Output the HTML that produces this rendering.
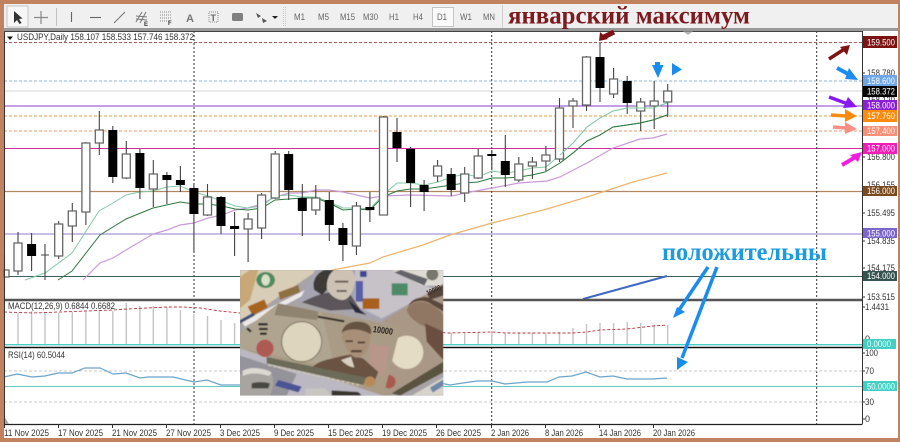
<!DOCTYPE html>
<html><head><meta charset="utf-8"><style>
html,body{margin:0;padding:0;background:#c1835f}
svg{display:block;filter:blur(.35px)}
text{font-family:"Liberation Sans",sans-serif;font-size:9px;fill:#333}
.tf{fill:#666;font-size:9px}
.s{font-family:"Liberation Serif",serif;font-weight:bold;font-size:25px}
</style></head><body>
<svg width="900" height="442" viewBox="0 0 900 442" xmlns="http://www.w3.org/2000/svg">
<defs>
<clipPath id="im"><rect x="0" y="0" width="610" height="377"/></clipPath>
<filter id="b" x="-5%" y="-5%" width="110%" height="110%"><feGaussianBlur stdDeviation="1.800"/></filter>
</defs>
<rect width="900" height="442" fill="#c1835f"/>
<!-- toolbar -->
<rect x="4" y="4" width="894" height="25" fill="#f0f0f0"/>
<rect x="4" y="28" width="894" height="3" fill="#9a9a9a"/>
<rect x="7" y="6" width="21" height="21" fill="#f7f7f7" stroke="#c4c4c4"/>
<path d="M14 11l0 12 3-3 2.500 4 2-1-2.500-4 3.500-.5z" fill="#333"/>
<path d="M41 11v13M34 17.500h14" stroke="#888" stroke-width="1.200" fill="none"/>
<path d="M56.500 8v18" stroke="#c2c2c2"/>
<path d="M71.500 12v10" stroke="#666" stroke-width="1.100"/>
<path d="M90 17.500h11" stroke="#666" stroke-width="1.100"/>
<path d="M114 23l11-11" stroke="#777" stroke-width="1.100"/>
<path d="M136 22l6-10M140 23l6-11M136 16l11 1M136 19l11 1" stroke="#777" fill="none"/>
<text x="144" y="26" style="font-size:6px;font-weight:bold">E</text>
<path d="M160 12h12M160 15h12M160 18h12M160 21h9" stroke="#888" stroke-dasharray="1 1"/>
<text x="168" y="25" style="font-size:6px;font-weight:bold">F</text>
<text x="186" y="22" style="font-size:11px;font-weight:bold;fill:#777">A</text>
<rect x="209" y="12" width="9" height="10" fill="none" stroke="#888" stroke-dasharray="1 1"/>
<text x="210.500" y="21" style="font-size:9px;font-weight:bold;fill:#666">T</text>
<rect x="232" y="13" width="11" height="8" rx="1.500" fill="#808080"/>
<path d="M256 13l5 3-3 2zM262 18l5 3-4 2z" fill="#555"/>
<path d="M272 16h6l-3 3z" fill="#222"/>
<path d="M283.500 7v19M285.500 7v19" stroke="#c8c8c8" stroke-dasharray="1 1"/>
<text class="tf" x="294" y="20" textLength="11" lengthAdjust="spacingAndGlyphs">M1</text>
<text class="tf" x="318" y="20" textLength="11" lengthAdjust="spacingAndGlyphs">M5</text>
<text class="tf" x="340" y="20" textLength="15" lengthAdjust="spacingAndGlyphs">M15</text>
<text class="tf" x="363" y="20" textLength="15" lengthAdjust="spacingAndGlyphs">M30</text>
<text class="tf" x="389" y="20" textLength="10" lengthAdjust="spacingAndGlyphs">H1</text>
<text class="tf" x="413" y="20" textLength="10" lengthAdjust="spacingAndGlyphs">H4</text>
<rect x="432.500" y="7.500" width="21" height="19" fill="#fafafa" stroke="#c4c4c4"/>
<text class="tf" x="437" y="20" textLength="10" lengthAdjust="spacingAndGlyphs">D1</text>
<text class="tf" x="460" y="20" textLength="12" lengthAdjust="spacingAndGlyphs">W1</text>
<text class="tf" x="483" y="20" textLength="12" lengthAdjust="spacingAndGlyphs">MN</text>
<path d="M502.500 5v23" stroke="#d0d0d0"/>
<text class="s" x="508" y="23.500" style="fill:#7d1a1f" textLength="242" lengthAdjust="spacingAndGlyphs">январский максимум</text>

<!-- chart bg -->
<rect x="4" y="31" width="894" height="407" fill="#fff"/>
<!-- levels -->
<g fill="none">
<path d="M4 42.500H862" stroke="#8c2a2a" stroke-width=".8" stroke-dasharray="3 2"/>
<path d="M4 81H862" stroke="#8eb6e0" stroke-width=".9" stroke-dasharray="3 2"/>
<path d="M4 91H862" stroke="#dedede" stroke-width="1.200"/>
<path d="M4 106H862" stroke="#8a3cc8" stroke-width="1.100"/>
<path d="M4 116H862" stroke="#e2a040" stroke-width=".9" stroke-dasharray="3 2"/>
<path d="M4 131H862" stroke="#ee9d72" stroke-width=".9" stroke-dasharray="3 2"/>
<path d="M4 148.500H862" stroke="#d02c9c" stroke-width="1.100"/>
<path d="M4 191.500H862" stroke="#b08860" stroke-width="1.200"/>
<path d="M4 234H862" stroke="#a898d8" stroke-width="1.200"/>
<path d="M4 276.500H862" stroke="#3e6058" stroke-width="1"/>
<path d="M194 31V424M491.700 31V424M816.700 31V424" stroke="#333" stroke-width="1" stroke-dasharray="2 2"/>
</g>
<!-- MA lines -->
<g fill="none" stroke-width="1">
<polyline stroke="#ecb56c" stroke-width="1.200" points="332,270 370,263 383,257 423,245 450,235 492,223 500,221 547,209 587,197 633,182 667,173"/>
<polyline stroke="#c89ad8" stroke-width="1.200" points="83,280 100,263 113,258 126,250 153,234 167,230 180,225 194,223 208,218 222,215 235,210 248,208 262,204 275,197 289,193 302,193 316,190 329,190 343,192 370,198 383,196 410,195 452,196 465,193 492,188 519,183 547,181 560,177 587,163 613,148 640,139 653,138 667,134"/>
<polyline stroke="#86c8a8" points="25,280 45,273 72,253 99,211 113,203 126,195 140,192 153,191 167,187 180,186 194,192 208,196 222,201 235,206 248,208 262,206 275,196 289,195 302,197 316,197 329,202 343,208 357,208 370,209 383,195 397,183 410,183 424,185 438,182 452,177 465,174 478,177 492,171 506,173 519,171 532,168 546,167 560,155 573,143 587,127 600,118 613,111 627,108 640,108 653,108 667,103"/>
<polyline stroke="#2e7a42" points="58,280 72,271 100,235 126,219 153,208 180,202 194,204 208,204 222,206 235,209 248,210 262,208 275,200 289,199 302,198 316,198 329,203 343,210 357,209 370,210 383,197 397,191 410,189 424,189 438,187 452,185 465,183 478,182 492,178 506,178 519,177 532,175 545,172 560,163 573,153 587,141 600,135 613,127 627,125 640,123 653,120 667,115"/>
</g>
<path d="M583 299L667 276" stroke="#3f68c4" stroke-width="2" fill="none"/>
<!-- wicks -->
<path fill="none" stroke="#444" stroke-width="1.100" d="M4.500 255V290M18 232V275M31.600 233V271M45 244V280M41 255H49M58.700 221V259M72.300 203V242M85.900 142V225M99.300 111V155M112.800 126V183M126.300 141V179M139.900 149V199M153.300 160V207M166.900 172V204M180.400 166V192M193.900 183V251M207.500 184V216M221 196V234M234.600 212V256M248.100 213V262M261.600 193V239M275.200 151V199M288.700 151V200M302.300 184V236M315.800 185V215M329.300 192V241M342.900 223V261M356.400 202V255M369.900 192V222M383.500 116V215M397 118V162M410.600 147V207M424.100 180V211M437.600 160V182M451.200 168V196M464.700 167V202M478.200 149V179M491.800 150V170M505.300 135V187M518.800 157V182M532.400 157V179M545.900 146V171M559.500 98V162M573 98V128M586.500 56V111M600 43V102M613.600 68V98M627.200 76V114M640.700 98V131M654.200 81V129M667.700 84V117"/>
<!-- white bodies -->
<path fill="#fff" stroke="#666" stroke-width="1.300" d="M4 270h5v7h-5zM14 243h8V271h-8zM54.700 224h8V256h-8zM68.300 211h8V226h-8zM81.900 143h8V212h-8zM95.300 130h8V143h-8zM122.300 154h8V178h-8zM149.300 174h8V189h-8zM203.500 197h8V215h-8zM244.100 219h8V229h-8zM257.600 195h8V228h-8zM271.200 154h8V198h-8zM311.800 198h8V210h-8zM352.400 206h8V246h-8zM379.500 117h8V215h-8zM433.600 166h8V176h-8zM460.700 174h8V193h-8zM474.200 156h8V178h-8zM514.800 164h8V180h-8zM528.400 162h8V166h-8zM541.900 155h8V161h-8zM555.500 108h8V159h-8zM569 101h8V106h-8zM582.500 57h8V105h-8zM609.600 79h8V94h-8zM636.700 102h8V111h-8zM650.200 101h8V106h-8zM663.700 91h8V102h-8z"/>
<!-- black bodies -->
<path fill="none" stroke="#000" stroke-width="9" d="M31.600 244V256M112.800 130V177M139.900 153V188M166.900 175V180M180.400 180V185M193.900 188V214M221 197V226M234.600 226V229M288.700 154V190M302.300 198V211M329.300 200V225M342.900 228V245M369.900 207V210M397 132V148M410.600 149V183M424.100 185V192M451.200 174V190M491.800 154V156M505.300 161V175M600 57V88M627.200 81V103"/>
<!-- MA over candles -->
<polyline fill="none" stroke="#86c8a8" stroke-width=".9" points="560,155 573,143 587,127 600,118 613,111 627,108 640,108 653,108 667,103"/>
<polyline fill="none" stroke="#2e7a42" stroke-width=".9" points="560,163 573,153 587,141 600,135 613,127 627,125 640,123 653,120 667,115"/>

<text x="17" y="40" textLength="177" lengthAdjust="spacingAndGlyphs">USDJPY,Daily  158.107 158.533 157.746 158.372</text>
<path d="M7 36.500h6l-3 3.500z" fill="#111"/>

<!-- MACD -->
<path fill="none" stroke="#c4c4c4" stroke-width="1.400" d="M18 344V313M31.600 344V311M45 344V312M58.700 344V313M72.300 344V312M85.900 344V311M99.300 344V310M112.800 344V311M126.300 344V303M139.900 344V306M153.300 344V306M166.900 344V307M180.400 344V310M193.900 344V314M207.500 344V316M221 344V320M234.600 344V323M451.200 344V333M464.700 344V333M478.200 344V333M491.800 344V331M505.300 344V333M518.800 344V333M532.400 344V333M545.900 344V333M559.500 344V332M573 344V328M586.500 344V324M600 344V323M613.600 344V323M627.200 344V322M640.700 344V323M654.200 344V325M667.700 344V325"/>
<polyline fill="none" stroke="#c0303a" stroke-width=".9" stroke-dasharray="3 2" points="4,312 33,313 113,310 127,309 167,307 183,307 200,308 220,311 240,313 447,333 492,332 507,333 573,333 587,332 600,330 627,329 653,326 667,325"/>
<text x="8" y="309" textLength="107" lengthAdjust="spacingAndGlyphs">MACD(12,26,9) 0.6844 0.6682</text>
<path d="M4 344.700H862" stroke="#48cfc4" stroke-width="1.300"/>
<path d="M4 300H862" stroke="#555" stroke-width="2.500"/>
<path d="M4 347.500H862" stroke="#111" stroke-width="1.500"/>
<!-- RSI -->
<path d="M4 371H862M4 402H862" stroke="#c8c8c8" stroke-dasharray="3 2" stroke-width=".9"/>
<path d="M4 386.500H862" stroke="#5fcdc4" stroke-width="1"/>
<polyline fill="none" stroke="#6aa4cc" stroke-width="1.200" points="4,377 17,374 32,377 45,376 58,373 72,373 85,368 100,368 113,374 126,373 140,378 148,377 173,377 194,382 207,380 221,385 240,385 440,383 450,385 463,383 477,381 492,381 505,384 527,382 547,382 559,377 572,376 586,372 600,377 613,376 627,379 653,379 667,378"/>
<text x="8" y="358" textLength="57" lengthAdjust="spacingAndGlyphs">RSI(14) 60.5044</text>
<path d="M4 424.500H862" stroke="#222" stroke-width="1.200"/>
<path d="M4 416l5 8H4z" fill="#aaa"/>
<!-- axis line -->
<path d="M862.500 31V424.500M4.500 31V424" stroke="#333" stroke-width="1"/>
<path d="M4 31.500H862" stroke="#444"/>
<!-- ticks -->
<path stroke="#333" d="M4.500 424v4M58.500 424v4M112.500 424v4M166.500 424v4M220.500 424v4M274.500 424v4M328.500 424v4M382.500 424v4M436.500 424v4M491.500 424v4M545.500 424v4M599.500 424v4M653.500 424v4M862 73h3M862 157h3M862 213h3M862 241h3M862 268h3M862 297h3M862 307h3M862 353h3M862 371h3M862 402h3M862 419h3"/>
<text x="4" y="436" textLength="45" lengthAdjust="spacingAndGlyphs">11 Nov 2025</text>
<text x="58" y="436" textLength="45" lengthAdjust="spacingAndGlyphs">17 Nov 2025</text>
<text x="112" y="436" textLength="45" lengthAdjust="spacingAndGlyphs">21 Nov 2025</text>
<text x="166" y="436" textLength="45" lengthAdjust="spacingAndGlyphs">27 Nov 2025</text>
<text x="220" y="436" textLength="40" lengthAdjust="spacingAndGlyphs">3 Dec 2025</text>
<text x="274" y="436" textLength="40" lengthAdjust="spacingAndGlyphs">9 Dec 2025</text>
<text x="328" y="436" textLength="45" lengthAdjust="spacingAndGlyphs">15 Dec 2025</text>
<text x="382" y="436" textLength="45" lengthAdjust="spacingAndGlyphs">19 Dec 2025</text>
<text x="436" y="436" textLength="45" lengthAdjust="spacingAndGlyphs">26 Dec 2025</text>
<text x="491" y="436" textLength="38" lengthAdjust="spacingAndGlyphs">2 Jan 2026</text>
<text x="545" y="436" textLength="38" lengthAdjust="spacingAndGlyphs">8 Jan 2026</text>
<text x="599" y="436" textLength="42" lengthAdjust="spacingAndGlyphs">14 Jan 2026</text>
<text x="653" y="436" textLength="42" lengthAdjust="spacingAndGlyphs">20 Jan 2026</text>
<!-- right axis plain -->
<text x="867" y="76" textLength="28" lengthAdjust="spacingAndGlyphs">158.780</text>
<text x="867" y="103" textLength="28" lengthAdjust="spacingAndGlyphs">158.120</text>
<text x="867" y="160" textLength="28" lengthAdjust="spacingAndGlyphs">156.800</text>
<text x="867" y="188" textLength="28" lengthAdjust="spacingAndGlyphs">156.155</text>
<text x="867" y="216" textLength="28" lengthAdjust="spacingAndGlyphs">155.495</text>
<text x="867" y="244" textLength="28" lengthAdjust="spacingAndGlyphs">154.835</text>
<text x="867" y="271" textLength="28" lengthAdjust="spacingAndGlyphs">154.175</text>
<text x="867" y="300" textLength="28" lengthAdjust="spacingAndGlyphs">153.515</text>
<text x="865" y="310" textLength="24" lengthAdjust="spacingAndGlyphs">1.4431</text>
<text x="865" y="342">0</text>
<text x="865" y="356" textLength="13" lengthAdjust="spacingAndGlyphs">100</text>
<text x="865" y="374" textLength="9" lengthAdjust="spacingAndGlyphs">70</text>
<text x="865" y="405" textLength="9" lengthAdjust="spacingAndGlyphs">30</text>
<text x="865" y="422">0</text>
<!-- labels -->
<rect x="863" y="36" width="34" height="12" fill="#7c1212"/><text style="fill:#fff" x="867" y="45.500" textLength="28" lengthAdjust="spacingAndGlyphs">159.500</text>
<rect x="863" y="75" width="34" height="11" fill="#6ea6e8"/><text style="fill:#fff" x="867" y="84" textLength="28" lengthAdjust="spacingAndGlyphs">158.600</text>
<rect x="863" y="86" width="34" height="11" fill="#050505"/><text style="fill:#fff" x="867" y="94.500" textLength="28" lengthAdjust="spacingAndGlyphs">158.372</text>
<rect x="863" y="100" width="34" height="11" fill="#8a1fd8"/><text style="fill:#fff" x="867" y="108.500" textLength="28" lengthAdjust="spacingAndGlyphs">158.000</text>
<rect x="863" y="110" width="34" height="12" fill="#f98c10"/><text style="fill:#fff" x="867" y="119" textLength="28" lengthAdjust="spacingAndGlyphs">157.760</text>
<rect x="863" y="126" width="34" height="10" fill="#fb8f75"/><text style="fill:#fff" x="867" y="134" textLength="28" lengthAdjust="spacingAndGlyphs">157.400</text>
<rect x="863" y="143" width="34" height="11" fill="#f01eb4"/><text style="fill:#fff" x="867" y="151.500" textLength="28" lengthAdjust="spacingAndGlyphs">157.000</text>
<rect x="863" y="186" width="34" height="10" fill="#7a4a1e"/><text style="fill:#fff" x="867" y="194" textLength="28" lengthAdjust="spacingAndGlyphs">156.000</text>
<rect x="863" y="228" width="34" height="10" fill="#7a66cc"/><text style="fill:#fff" x="867" y="236.500" textLength="28" lengthAdjust="spacingAndGlyphs">155.000</text>
<rect x="863" y="271" width="34" height="10" fill="#36544f"/><text style="fill:#fff" x="867" y="279" textLength="28" lengthAdjust="spacingAndGlyphs">154.000</text>
<rect x="863" y="339" width="33" height="10" fill="#40d0c4"/><text style="fill:#fff" x="867" y="347" textLength="24" lengthAdjust="spacingAndGlyphs">0.0000</text>
<rect x="863" y="381" width="34" height="10" fill="#40d0c4"/><text style="fill:#fff" x="867" y="389.500" textLength="28" lengthAdjust="spacingAndGlyphs">50.0000</text>

<!-- arrows -->
<path d="M614 32L604 37" stroke="#7c1212" stroke-width="5"/><path d="M599 41l1-9 8 7z" fill="#7c1212"/>
<path d="M829 59L843 50" stroke="#7c1212" stroke-width="3.500"/><path d="M850 45l-10 2 7 8z" fill="#7c1212"/>
<path d="M837 68L850 75" stroke="#1a8cf0" stroke-width="4"/><path d="M858 80l-13-1 4-11z" fill="#1a8cf0"/>
<path d="M829 97L848 104" stroke="#8a18f0" stroke-width="3.500"/><path d="M857 107l-14 1 5-11z" fill="#8a18f0"/>
<path d="M831 115L846 116" stroke="#f98c10" stroke-width="3.500"/><path d="M857 116l-12 6v-13z" fill="#f98c10"/>
<path d="M833 127L846 128" stroke="#fb8f85" stroke-width="3.500"/><path d="M857 129l-12 5v-12z" fill="#fb8f85"/>
<path d="M842 165L854 158" stroke="#f01ee0" stroke-width="4"/><path d="M862 152l-12 3 8 7z" fill="#f01ee0"/>
<path d="M657.500 62V72" stroke="#1a8cf0" stroke-width="5"/><path d="M652 65h11.500l-5.500 13z" fill="#1a8cf0"/>
<path d="M672 63l10 6.500-10 6z" fill="#1a8cf0"/>
<path d="M683 31.500h10l-5 3.500z" fill="#b8b8b8"/>
<path d="M708 267L679 310" stroke="#1a8cf0" stroke-width="3.500"/><path d="M673 318l4-11 8 5z" fill="#1a8cf0"/>
<path d="M717 267L682 358" stroke="#1a8cf0" stroke-width="3.500"/><path d="M677 370l0-13 11 5z" fill="#1a8cf0"/>
<text class="s" x="662" y="260" style="fill:#1c9be0" textLength="165" lengthAdjust="spacingAndGlyphs">положительны</text>

<!-- photo -->
<g transform="translate(240,270) scale(.33333) translate(-15,-15)">
<g transform="translate(15,15)" clip-path="url(#im)"><g transform="translate(-15,-15)">
<g filter="url(#b)">
<rect x="0" y="0" width="640" height="400" fill="#a8a3a6"/>
<!-- top-left dollar -->
<path d="M15 15H250L20 170H15z" fill="#d8cdb6"/>
<path d="M15 35l30-20 25 0-25 90-30 25z" fill="#c9a878"/>
<ellipse cx="92" cy="45" rx="28" ry="24" fill="#4d8a5c"/>
<ellipse cx="92" cy="45" rx="13" ry="17" fill="#d8e0c8"/>
<path d="M38 125l50-22 10 24-45 25z" fill="#a8641f"/>
<path d="M130 82l60-22 5 22-60 22z" fill="#8f6f42"/>
<path d="M20 170L240 60l8 8L30 185z" fill="#ece8e6"/>
<path d="M15 165l40-22 5 8-45 25z" fill="#41506e"/>
<!-- top centre dollar -->
<path d="M240 15H470L625 80 445 165 330 135 190 112z" fill="#a6a4b2"/>
<path d="M360 15H470L600 75 440 160 360 120z" fill="#c6c2c8"/>
<path d="M470 15H625V62L560 62z" fill="#dedad4"/>
<path d="M478 22l90 40 10-20-80-27z" fill="#64646a"/>
<circle cx="592" cy="28" r="18" fill="#77776e"/>
<path d="M383 100h50v32h-50z" fill="#a8601e"/>
<path d="M470 55h48v36h-48z" fill="#4f8a68"/>
<path d="M362 48h22v62h-22z" fill="#5660a8"/>
<path d="M375 18h20v18h-20z" fill="#3c4690"/>
<!-- Franklin -->
<path d="M200 112c20-10 60-30 90-30l55 5 30 45-90 5z" fill="#5b565a"/>
<path d="M240 60c5-25 25-42 45-45l65 0c12 15 12 35 8 45-5 25-20 45-35 45s-35-10-45-30z" fill="#cdc2b4"/>
<path d="M238 75c-8-25 5-50 30-60h30c-15 10-25 30-22 60l-15 15z" fill="#3e3a36"/>
<path d="M300 50h40M305 78h30" stroke="#6a5e54" stroke-width="6"/>
<path d="M340 105l55 45-35-8z" fill="#2c2c3c"/>
<!-- right yen bill (behind main) -->
<path d="M440 170L625 55V292L465 392 430 392 470 180z" fill="#aa9886"/>
<circle cx="515" cy="262" r="50" fill="#e4dcc4"/>
<path d="M515 135c15-30 50-30 75-15s35 25 35 35v55l-55-25c-25-10-50-30-55-50z" fill="#8f7764"/>
<path d="M520 125c15-20 45-22 65-10l40 25v-22l-50-22c-30 0-50 10-55 29z" fill="#5c4a3c"/>
<path d="M570 175l55 25v85l-50-55z" fill="#6a5040"/>
<path d="M578 82l47-22v32l-42 13z" fill="#54443a"/>
<path d="M470 385l155-95v32l-130 70z" fill="#5a5240"/>
<path d="M530 392l95-55v55z" fill="#d8d4cc"/>
<path d="M585 368l40-25v20l-32 20z" fill="#7088a8"/>
<circle cx="462" cy="350" r="20" fill="#ab5a50"/>
<!-- lower-left dollar -->
<path d="M15 250l430 142H15z" fill="#bcb8c2"/>
<path d="M15 272l170 55-30 65H15z" fill="#94929a"/>
<path d="M130 345l70 20-10 17-70-20z" fill="#4a5494"/>
<path d="M15 330c15-15 60-25 90-15 15 25 10 55 0 77H15z" fill="#a8a4a0"/>
<path d="M50 355c15-5 35-5 55 0l-5 15H50z" fill="#4a4642"/>
<path d="M22 318c25-15 60-10 88 5l-8 10c-30-10-60-10-78 0z" fill="#dcd8d2"/>
<path d="M210 370h60l20 22h-80z" fill="#c8c6c2"/>
<path d="M290 376l80 5 10 11h-90z" fill="#3a3430"/>
<!-- main yen bill -->
<path d="M130 115L497 185 445 392 15 250 15 205z" fill="#a99b85"/>
<path d="M130 115L260 140 300 310 15 250 15 205z" fill="#afa48f"/>
<path d="M130 115L250 140 245 165 118 150z" fill="#8e8470"/>
<path d="M248 155l80 14" stroke="#2e2822" stroke-width="6"/>
<circle cx="200" cy="230" r="60" fill="#ded5be" stroke="#7a7060" stroke-width="3"/>
<circle cx="90" cy="250" r="26" fill="#ae5a52"/>
<path d="M70 178h28M72 192h26M75 206h20M36 190l12 10" stroke="#2e2a28" stroke-width="7"/>
<path d="M225 312c30-30 60-28 90-38l30-5 40 12 45 40-12 28-190-30z" fill="#6a5242"/>
<path d="M318 285c10 10 25 22 40 22l-10-32z" fill="#d8d0c0"/>
<path d="M320 205c0-22 25-37 50-32s40 30 35 55c-5 30-20 50-40 50s-45-45-45-73z" fill="#a88f78"/>
<path d="M320 203c5-25 30-37 60-32s30 25 28 37c-25-15-60-22-88-5z" fill="#665242"/>
<path d="M332 226h22v5h-22zM368 230h22v5h-22z" fill="#4a3a30"/>
<path d="M348 255h32v7h-32z" fill="#5a4638"/>
<path d="M405 235l60 10-18 90-45-40z" fill="#b8968a"/>
<path d="M95 295l290 65 10-22-300-62z" fill="#6c6a58"/>
<path d="M100 300l280 62" stroke="#cfc8b0" stroke-width="5" stroke-dasharray="9 6"/>
<circle cx="405" cy="350" r="16" fill="#b88a58"/>
</g>
<text x="413" y="201" transform="rotate(8 413 201)" style="font-size:27px;font-weight:bold;fill:#2a2420" textLength="60" lengthAdjust="spacingAndGlyphs">10000</text>
<text x="578" y="92" transform="rotate(-25 578 92)" style="font-size:22px;font-weight:bold;fill:#3e3028" textLength="46" lengthAdjust="spacingAndGlyphs">10000</text>
</g></g>
</g>
</svg>
</body></html>
